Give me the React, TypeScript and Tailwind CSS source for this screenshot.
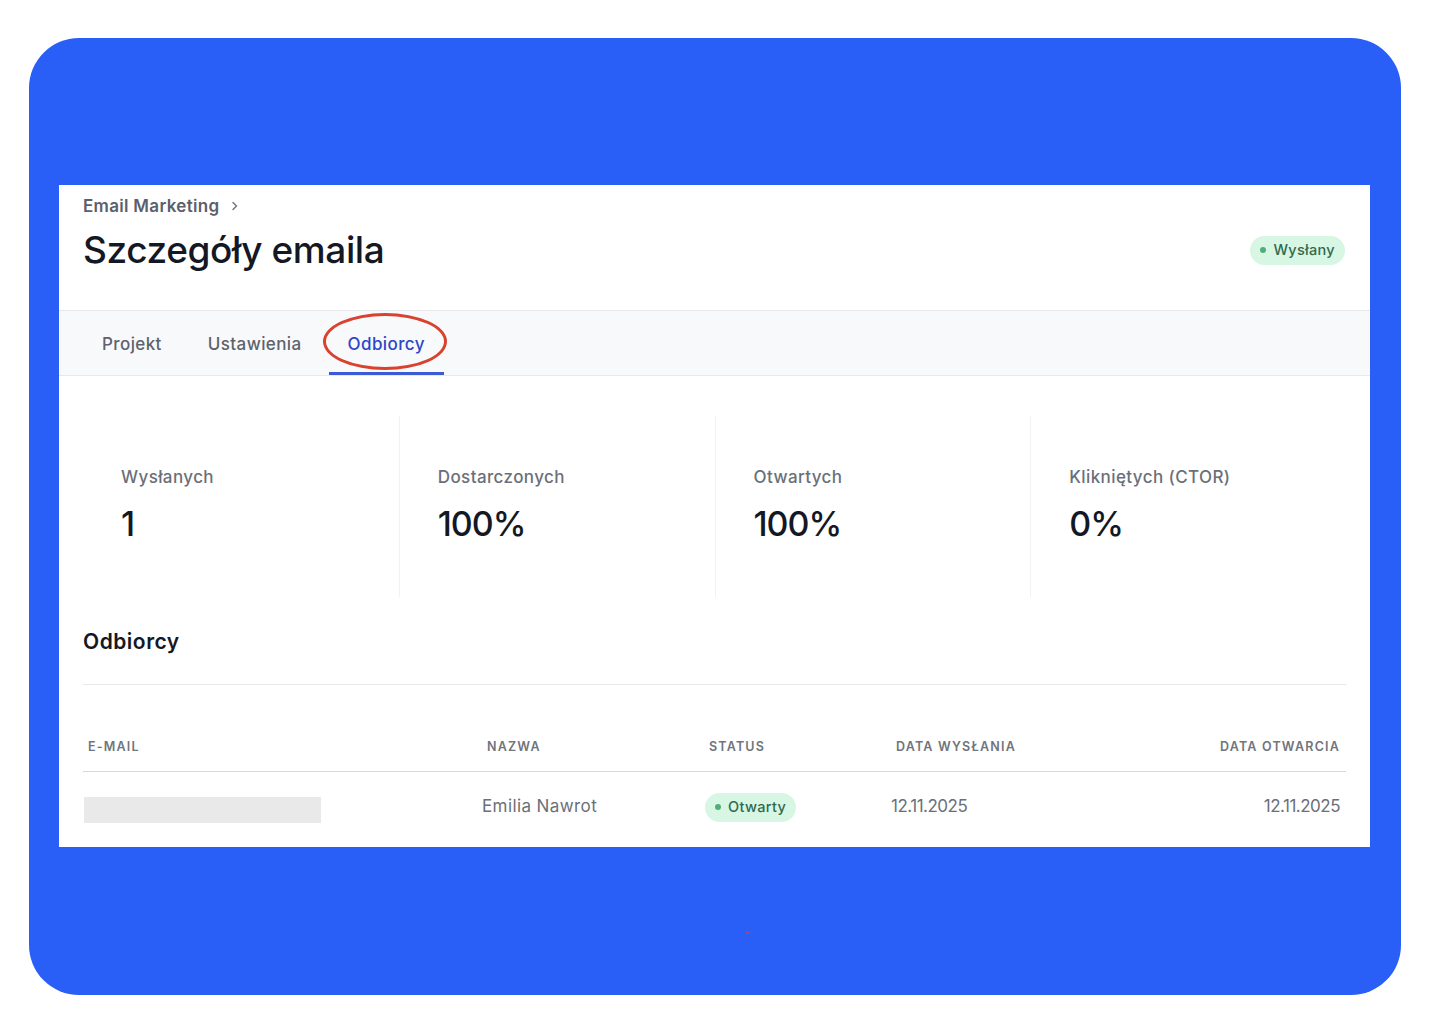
const STATS = [
  { label: "Wysłanych", value: "1" },
  { label: "Dostarczonych", value: "100%" },
  { label: "Otwartych", value: "100%" },
  { label: "Klikniętych (CTOR)", value: "0%" },
];

const TABS = ["Projekt", "Ustawienia", "Odbiorcy"];

function Pill({ label }: { label: string }) {
  return (
    <span className="inline-flex h-[29px] items-center gap-[7px] rounded-full bg-[#d8f6e4] pl-[10px] pr-[10px] text-[14.5px] font-medium tracking-[0.3px] text-[#2f6a4e]">
      <span className="h-[6px] w-[6px] rounded-full bg-[#4fae7b]" />
      {label}
    </span>
  );
}

export default function App() {
  return (
    <div className="min-h-[1024px] bg-white pl-[29px] pt-[38px] font-['Inter',sans-serif]">
      <div className="relative h-[957px] w-[1372px] rounded-[50px] bg-[#295ef7] pl-[30px] pt-[147px]">
        <div className="flex h-[662px] w-[1311px] flex-col bg-white">
          <div className="h-[126px] border-b border-[#e6e8ec] pl-6 pr-[25px] pt-[11px]">
            <div className="flex items-center gap-[11px] text-[17px] leading-[20px] font-semibold tracking-[0.3px] text-[#5b606b]">
              Email Marketing
              <svg width="10" height="10" viewBox="0 0 10 10" fill="none" stroke="#6b7280" strokeWidth="1.4">
                <path d="M3 1.5 6.5 5 3 8.5" strokeLinecap="round" strokeLinejoin="round" />
              </svg>
            </div>
            <div className="mt-[12px] flex items-center justify-between">
              <h1 className="text-[37px] leading-[44px] font-medium tracking-[-0.4px] text-[#141824]">Szczegóły emaila</h1>
              <Pill label="Wysłany" />
            </div>
          </div>

          <div className="flex h-[65px] gap-[8px] border-b border-[#e6e8ec] bg-[#f8f9fb] pl-6">
            {TABS.map((t) => {
              const active = t === "Odbiorcy";
              return (
                <button
                  key={t}
                  className={
                    active
                      ? "relative flex items-center border-b-[3px] border-[#3a5ad6] px-[19px] pt-[6px] text-[17px] font-medium tracking-[0.4px] text-[#2b47c6]"
                      : "relative flex items-center px-[19px] pt-[3px] text-[17px] font-medium tracking-[0.4px] text-[#5d626d]"
                  }
                >
                  {t}
                  {active && (
                    <span className="absolute left-[-6px] top-[2px] h-[57px] w-[124px] rounded-[50%] border-[3px] border-[#d8422f]" />
                  )}
                </button>
              );
            })}
          </div>

          <div className="px-6">
            <div className="mt-10 grid h-[181px] grid-cols-4">
              {STATS.map((s, i) => (
                <div
                  key={s.label}
                  className={
                    i === 0
                      ? "flex flex-col justify-center pl-[38px]"
                      : "flex flex-col justify-center border-l border-[#f1f2f4] pl-[38px]"
                  }
                >
                  <div className="text-[17px] leading-[20px] font-medium tracking-[0.4px] text-[#6b6f78]">{s.label}</div>
                  <div className="mt-[15px] text-[34px] leading-[44px] font-medium tracking-[-1px] text-[#141824]">{s.value}</div>
                </div>
              ))}
            </div>

            <h2 className="mt-[31px] text-[21px] leading-[28px] font-semibold tracking-[0.5px] text-[#141824]">Odbiorcy</h2>
            <div className="mt-[28px] border-t border-[#e6e8ec]" />

            <div className="grid grid-cols-[399px_223px_186px_1fr] border-b border-[#d5d7db] pb-[16px] pt-[54px] text-[12.5px] leading-[16px] font-semibold tracking-[1.2px] text-[#70747c]">
              <div className="pl-[5px]">E-MAIL</div>
              <div className="pl-[5px]">NAZWA</div>
              <div className="pl-[4px]">STATUS</div>
              <div className="flex justify-between pl-[5px] pr-[6px]">
                <span>DATA WYSŁANIA</span>
                <span>DATA OTWARCIA</span>
              </div>
            </div>

            <div className="grid grid-cols-[399px_223px_186px_1fr] items-center pt-[19px] text-[17px] text-[#6b6f78]">
              <div className="pl-[1px] pt-[6px]">
                <div className="h-[26px] w-[237px] bg-[#e9e9ea]" />
              </div>
              <div className="tracking-[0.4px]">Emilia Nawrot</div>
              <div>
                <Pill label="Otwarty" />
              </div>
              <div className="flex justify-between pr-[6px] tracking-[-0.5px]">
                <span>12.11.2025</span>
                <span>12.11.2025</span>
              </div>
            </div>
          </div>
        </div>
        <span className="absolute left-[717px] top-[893px] h-[3px] w-[3px] rounded-full bg-[#a24a78]" />
      </div>
    </div>
  );
}
